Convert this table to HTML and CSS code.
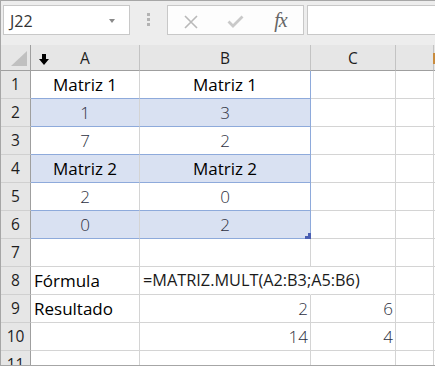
FILE: index.html
```html
<!DOCTYPE html>
<html lang="es">
<head>
<meta charset="utf-8">
<title>MATRIZ.MULT</title>
<link rel="stylesheet" href="styles.css">
</head>
<body>
<div class="window">
  <div class="toolbar">
    <div class="namebox"><span class="name">J22</span><span class="caret"></span></div>
    <div class="grip"><span></span><span></span><span></span></div>
    <div class="fbtns">
      <span class="slot">
        <svg width="14" height="14" viewBox="0 0 14 14"><path d="M1 1 L13 13 M13 1 L1 13" stroke="#b9b9b9" stroke-width="1.6" fill="none"/></svg>
      </span>
      <span class="slot">
        <svg width="17" height="13" viewBox="0 0 17 13"><path d="M1.5 6.5 L6 11 L15.5 1.5" stroke="#c9c9c9" stroke-width="2.8" fill="none"/></svg>
      </span>
      <span class="slot fx">fx</span>
    </div>
    <div class="finput"></div>
  </div>
  <div class="sheet">
    <div class="ch corner"><span class="tri"></span></div>
    <div class="ch colA"><svg class="selarrow" width="10" height="11" viewBox="0 0 10 11"><path d="M3 0 H7 V5 H10 L5 11 L0 5 H3 Z" fill="#000"/></svg>A</div>
    <div class="ch">B</div>
    <div class="ch">C</div>
    <div class="ch"></div>
    <div class="ch last"></div>

    <div class="rh">1</div>
    <div class="c ctr head tb">Matriz 1</div>
    <div class="c ctr head tb tr">Matriz 1</div>
    <div class="c"></div><div class="c"></div><div class="c last"></div>

    <div class="rh">2</div>
    <div class="c ctr num band tb">1</div>
    <div class="c ctr num band tb tr">3</div>
    <div class="c"></div><div class="c"></div><div class="c last"></div>

    <div class="rh">3</div>
    <div class="c ctr num tb">7</div>
    <div class="c ctr num tb tr">2</div>
    <div class="c"></div><div class="c"></div><div class="c last"></div>

    <div class="rh">4</div>
    <div class="c ctr head band tb">Matriz 2</div>
    <div class="c ctr head band tb tr">Matriz 2</div>
    <div class="c"></div><div class="c"></div><div class="c last"></div>

    <div class="rh">5</div>
    <div class="c ctr num tb">2</div>
    <div class="c ctr num tb tr">0</div>
    <div class="c"></div><div class="c"></div><div class="c last"></div>

    <div class="rh">6</div>
    <div class="c ctr num band tb">0</div>
    <div class="c ctr num band tb tr handlecell">2<span class="handle"></span></div>
    <div class="c"></div><div class="c"></div><div class="c last"></div>

    <div class="rh">7</div>
    <div class="c"></div><div class="c"></div><div class="c"></div><div class="c"></div><div class="c last"></div>

    <div class="rh">8</div>
    <div class="c txt">Fórmula</div>
    <div class="c txt spill">=MATRIZ.MULT(A2:B3;A5:B6)</div>
    <div class="c"></div><div class="c"></div><div class="c last"></div>

    <div class="rh">9</div>
    <div class="c txt">Resultado</div>
    <div class="c rgt num">2</div>
    <div class="c rgt num">6</div>
    <div class="c"></div><div class="c last"></div>

    <div class="rh">10</div>
    <div class="c"></div>
    <div class="c rgt num">14</div>
    <div class="c rgt num">4</div>
    <div class="c"></div><div class="c last"></div>

    <div class="rh">11</div>
    <div class="c"></div><div class="c"></div><div class="c"></div><div class="c"></div><div class="c last"></div>
  </div>
  <span class="edgemark"></span>
</div>
</body>
</html>
```
FILE: styles.css
```css
* { box-sizing: border-box; }

body {
  margin: 0;
  background: #ffffff;
  font-family: "Open Sans", "Noto Sans", sans-serif;
}

.window {
  position: relative;
  width: 435px;
  height: 366px;
  border-top: 1px solid #a6a6a6;
  border-left: 1px solid #a6a6a6;
  border-bottom: 1px solid #a6a6a6;
  overflow: hidden;
  background: #ffffff;
}

/* ---------- toolbar ---------- */
.toolbar {
  height: 44px;
  background: #ededed;
  display: flex;
  align-items: flex-start;
  padding: 4px 0 0 2px;
}

.namebox {
  width: 127px;
  height: 30px;
  background: #ffffff;
  border: 1px solid #c8c8c8;
  display: flex;
  align-items: center;
  justify-content: space-between;
  padding: 2px 14px 0 6px;
}

.name {
  font-size: 16px;
  color: #333333;
}

.caret {
  width: 0;
  height: 0;
  border-left: 3.5px solid transparent;
  border-right: 3.5px solid transparent;
  border-top: 4px solid #8a8a8a;
}

.grip {
  width: 3px;
  margin: 8px 17px 0 17px;
  display: flex;
  flex-direction: column;
  gap: 2px;
}

.grip span {
  width: 3px;
  height: 3px;
  background: #b3b3b3;
}

.fbtns {
  width: 137px;
  height: 30px;
  background: #fdfdfd;
  border: 1px solid #c8c8c8;
  display: flex;
}

.slot {
  width: 45px;
  display: flex;
  align-items: center;
  justify-content: center;
  padding-top: 3px;
}

.fx {
  font-family: "Liberation Serif", "DejaVu Serif", serif;
  font-style: italic;
  font-size: 20px;
  color: #666666;
  letter-spacing: -1px;
  padding-top: 0;
}

.finput {
  flex: 1;
  height: 30px;
  margin-left: 3px;
  margin-right: -4px;
  background: #ffffff;
  border: 1px solid #c8c8c8;
}

/* ---------- sheet ---------- */
.sheet {
  display: grid;
  grid-template-columns: 30px 109px 171px 85px 38px 1fr;
  grid-template-rows: 26px repeat(11, 28px);
}

.ch {
  position: relative;
  background: #e6e6e6;
  border-right: 1px solid #c3c3c3;
  border-bottom: 1px solid #9f9f9f;
  text-align: center;
  font-size: 15.5px;
  line-height: 26px;
  color: #1e1e1e;
}

.ch.corner {
  border-right-color: #9f9f9f;
  display: flex;
  justify-content: flex-end;
  align-items: flex-end;
  padding: 0 3px 4px 0;
}

.tri {
  width: 0;
  height: 0;
  border-left: 16px solid transparent;
  border-bottom: 15px solid #c0c0c0;
}

.selarrow {
  position: absolute;
  left: 8px;
  top: 9px;
}

.rh {
  background: #e6e6e6;
  border-right: 1px solid #9f9f9f;
  border-bottom: 1px solid #d0d0d0;
  text-align: center;
  font-size: 15.5px;
  line-height: 27px;
  color: #1e1e1e;
}

.c {
  border-right: 1px solid #d4d4d4;
  border-bottom: 1px solid #d4d4d4;
  font-size: 17px;
  line-height: 27px;
  white-space: nowrap;
  color: #000000;
}

.last, .ch.last { border-right: none; }

.ctr { text-align: center; }
.rgt { text-align: right; padding-right: 2px; }
.txt { padding-left: 3px; }

.head { color: #000000; }
.num { color: #2c2f40; font-weight: 300; }

.band { background: #d9e1f2; }
.tb { border-bottom-color: #8eaadb; }
.tr { border-right-color: #8eaadb; }

.spill {
  overflow: visible;
  border-right-color: transparent;
  color: #1a1a1a;
  font-size: 16.3px;
}

.handlecell { position: relative; }

.handle {
  position: absolute;
  right: -1px;
  bottom: -1px;
  width: 6px;
  height: 6px;
  background: linear-gradient(#4a5fb3, #4a5fb3) right top / 3px 3px no-repeat,
              linear-gradient(#4a5fb3, #4a5fb3) left bottom / 6px 3px no-repeat;
}

.edgemark {
  position: absolute;
  left: 432px;
  top: 52px;
  width: 3px;
  height: 11px;
  background: #c98c3e;
}
```
